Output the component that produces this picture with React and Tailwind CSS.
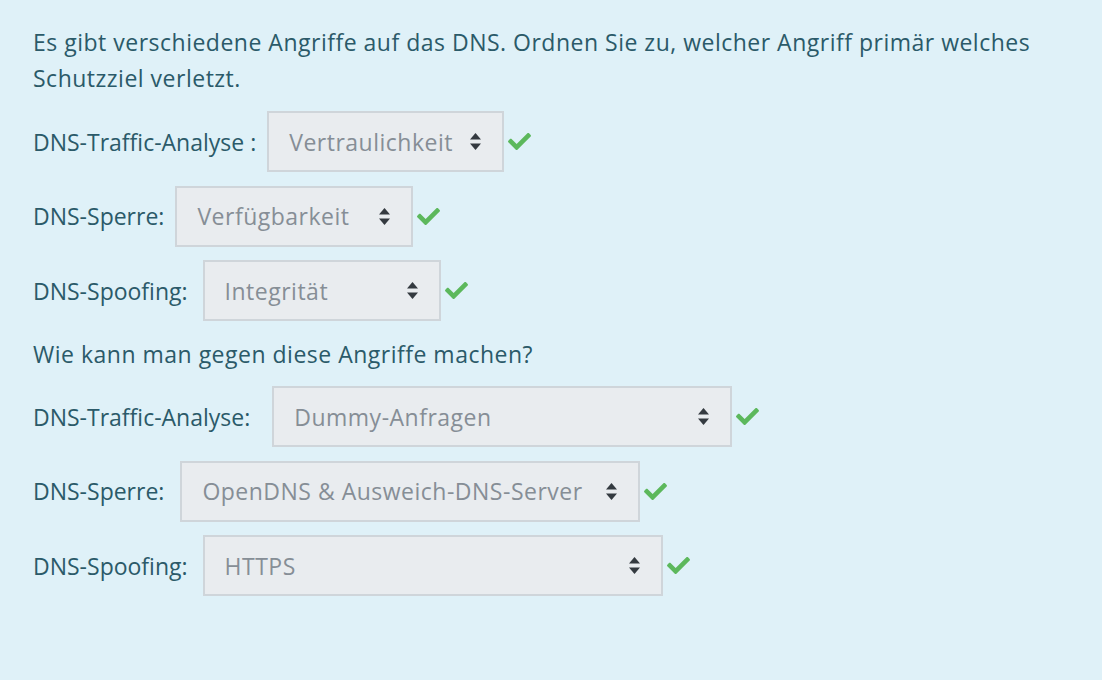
import { FaCheck } from 'react-icons/fa';

const Arrows = () => (
  <svg width="13" height="19" viewBox="0 0 13 19" className="shrink-0">
    <path d="M6.5 1 L12 7.5 L1 7.5 Z" fill="#343a40" />
    <path d="M6.5 18 L12 11.5 L1 11.5 Z" fill="#343a40" />
  </svg>
);

const Row = ({ label, value, width, gap }) => (
  <div className="flex items-center">
    <span className={gap}>{label}</span>
    <div
      className={`flex h-[61px] items-center justify-between border-2 border-[#cfd5da] bg-[#e9ecef] pl-[20px] pr-[20px] text-[#868e96] ${width}`}
    >
      <span className="whitespace-nowrap tracking-[0.5px]">{value}</span>
      <Arrows />
    </div>
    <FaCheck className="ml-[4px] text-[23px] text-[#5cb85c]" />
  </div>
);

export default function App() {
  return (
    <div
      className="min-h-[680px] w-full bg-[#dff1f8] px-[33px] pt-[24px] text-[23px] leading-[36px] text-[#2b5a69]"
      style={{ fontFamily: '"Open Sans", sans-serif' }}
    >
      <p className="tracking-[0.5px]">
        Es gibt verschiedene Angriffe auf das DNS. Ordnen Sie zu, welcher Angriff primär welches
        <br />
        Schutzziel verletzt.
      </p>
      <div className="mt-[15px] flex flex-col gap-[13.5px]">
        <Row label="DNS-Traffic-Analyse :" value="Vertraulichkeit" width="w-[237px]" gap="mr-[11px]" />
        <Row label="DNS-Sperre:" value="Verfügbarkeit" width="w-[238px]" gap="mr-[11px]" />
        <Row label="DNS-Spoofing:" value="Integrität" width="w-[238px]" gap="mr-[15px]" />
      </div>
      <p className="mt-[15px] tracking-[0.5px]">Wie kann man gegen diese Angriffe machen?</p>
      <div className="mt-[14px] flex flex-col gap-[13.5px]">
        <Row label="DNS-Traffic-Analyse:" value="Dummy-Anfragen" width="w-[460px]" gap="mr-[22px]" />
        <Row label="DNS-Sperre:" value="OpenDNS & Ausweich-DNS-Server" width="w-[460px]" gap="mr-[16px]" />
        <Row label="DNS-Spoofing:" value="HTTPS" width="w-[460px]" gap="mr-[15px]" />
      </div>
    </div>
  );
}
